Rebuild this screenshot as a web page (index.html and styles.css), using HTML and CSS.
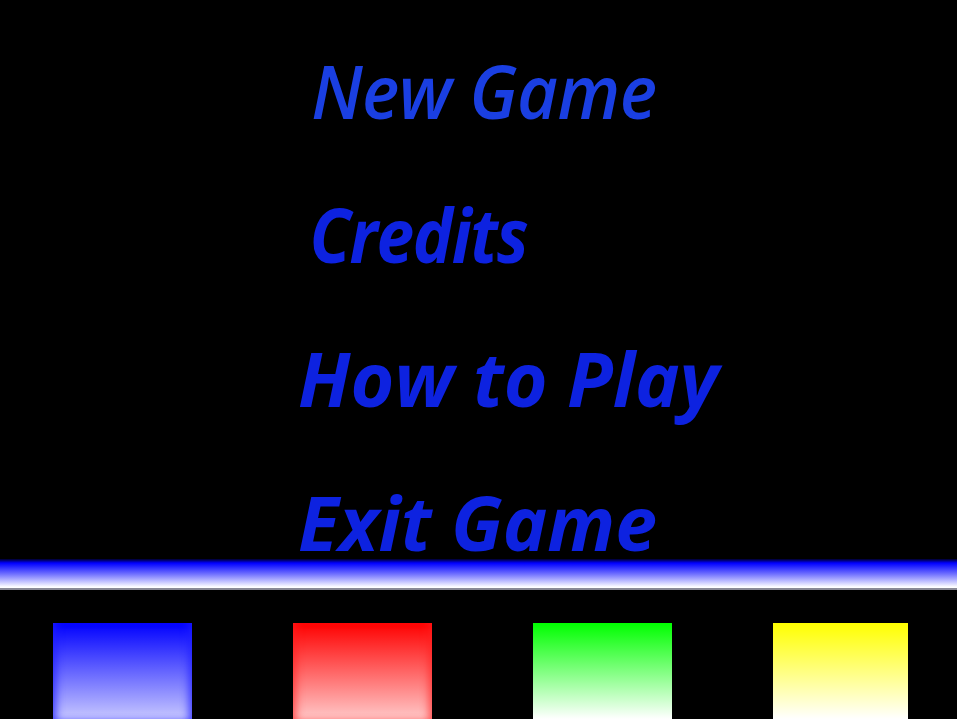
FILE: index.html
```html
<!DOCTYPE html>
<html>
<head>
<meta charset="utf-8">
<link rel="stylesheet" href="styles.css">
</head>
<body>
<div class="screen">
  <nav class="menu">
    <div class="item item-new">New Game</div>
    <div class="item item-credits">Credits</div>
    <div class="item item-how">How to Play</div>
    <div class="item item-exit">Exit Game</div>
  </nav>
  <div class="bar"></div>
  <div class="swatches">
    <div class="swatch blue"></div>
    <div class="swatch red"></div>
    <div class="swatch green"></div>
    <div class="swatch yellow"></div>
  </div>
</div>
</body>
</html>
```
FILE: styles.css
```css
html, body {
  margin: 0;
  padding: 0;
  background: #000;
  overflow: hidden;
}
.screen {
  width: 957px;
  height: 719px;
  display: flex;
  flex-direction: column;
  background: #000;
}
.menu {
  height: 559px;
  padding-top: 18px;
  box-sizing: border-box;
  display: flex;
  flex-direction: column;
}
.item {
  font-family: "Open Sans", "DejaVu Sans", sans-serif;
  font-style: italic;
  font-weight: 700;
  font-size: 75px;
  line-height: 144px;
  height: 144px;
  color: #0d22e0;
  white-space: nowrap;
  transform-origin: left center;
}
.item-new {
  padding-left: 331px;
  font-weight: 600;
  letter-spacing: -0.5px;
  transform: scaleX(0.94);
  color: #1a3fe2;
}
.item-credits {
  padding-left: 344px;
  letter-spacing: -1.5px;
  transform: scaleX(0.9);
}
.item-how { padding-left: 298px; letter-spacing: 0; }
.item-exit { padding-left: 298px; letter-spacing: 0; }
.bar {
  height: 29px;
  background: linear-gradient(#00002a 0px, #0000ff 4px, #7070ff 15px, #ffffff 28px);
  border-bottom: 2px solid #8a8a96;
}
.swatches {
  display: flex;
  gap: 101px;
  padding-left: 53px;
  margin-top: 33px;
}
.swatch {
  width: 139px;
  height: 96px;
  flex: none;
}
.blue {
  background: linear-gradient(#0000ff, #c8c8ff);
  box-shadow: inset 7px 0 9px -4px rgba(30,30,255,0.8), inset -7px 0 9px -4px rgba(30,30,255,0.8);
}
.red {
  background: linear-gradient(#ff0000, #ffc8c8);
  box-shadow: inset 7px 0 9px -4px rgba(255,30,30,0.7), inset -7px 0 9px -4px rgba(255,30,30,0.7);
}
.green {
  background: linear-gradient(#00ff00, #ffffff);
}
.yellow {
  width: 135px;
  background: linear-gradient(#ffff00, #ffffff);
}
```
